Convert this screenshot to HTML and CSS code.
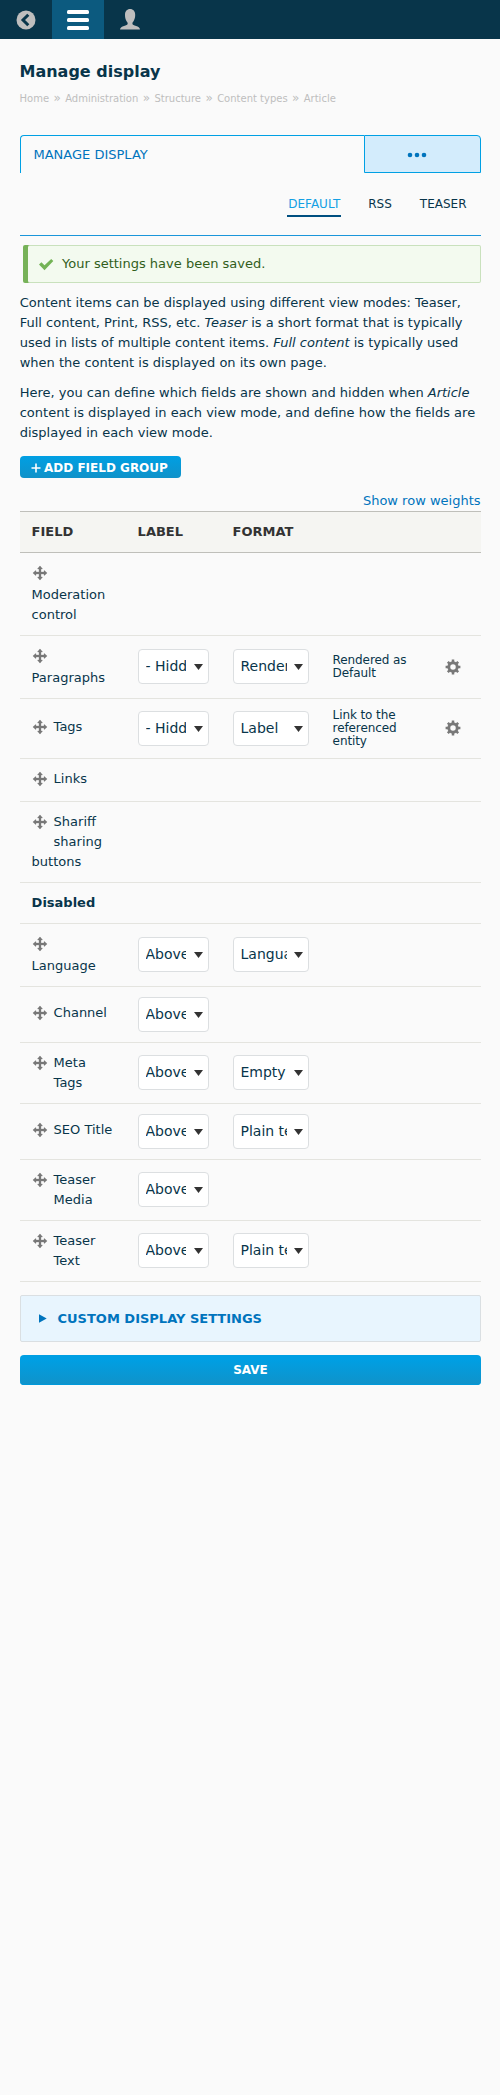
FILE: index.html
```html
<!DOCTYPE html>
<html lang="en">
<head>
<meta charset="utf-8">
<title>Manage display</title>
<link rel="stylesheet" href="styles.css">
</head>
<body>
<svg class="defs" width="0" height="0">
  <symbol id="move" viewBox="0 0 16 16"><path fill="#787878" stroke="#787878" stroke-width=".3" d="M14.900 7.800L12.300 5.600c-.2-.1-.3 0-.3.2V7H9V4h1.200c.2 0 .3-.2.2-.3L8.200 1.100c-.1-.1-.3-.1-.4 0L5.600 3.700c-.1.100 0 .3.2.3H7v3H4V5.800c0-.2-.2-.3-.3-.2L1.100 7.800c-.1.100-.1.300 0 .4l2.600 2.200c.1.100.3 0 .3-.2V9h3v3H5.800c-.2 0-.3.2-.2.3l2.200 2.600c.1.100.3.100.4 0l2.200-2.600c.1-.1 0-.3-.2-.3H9V9h3v1.200c0 .2.2.3.3.2l2.600-2.200c.1-.1.100-.3 0-.4z"/></symbol>
  <symbol id="gear" viewBox="0 0 16 16"><circle cx="8" cy="8" r="4.200" fill="none" stroke="#787878" stroke-width="2.900"/><path stroke="#787878" stroke-width="2.500" d="M8 .6v2.600M8 12.800v2.600M.6 8h2.600M12.800 8h2.600M2.800 2.800l1.800 1.800M11.400 11.400l1.800 1.800M13.200 2.800l-1.800 1.800M4.600 11.400l-1.800 1.800"/></symbol>
</svg>
<nav class="toolbar">
  <a class="tool"><svg width="20" height="20" viewBox="0 0 20 20"><circle cx="10" cy="10" r="9.500" fill="#bebebe"/><path d="M12.300 4.800L7 10l5.300 5.200" fill="none" stroke="#08354a" stroke-width="3"/></svg></a>
  <a class="tool tool-active"><svg width="22" height="22" viewBox="0 0 22 22" fill="#fff"><rect y="1" width="22" height="4" rx="1.500"/><rect y="9" width="22" height="4" rx="1.500"/><rect y="17" width="22" height="4" rx="1.500"/></svg></a>
  <a class="tool"><svg width="20" height="21" viewBox="0 0 20 21"><path fill="#bebebe" d="M0 20.500c.2-2.300 2-3 4-3.600 2-.6 3.700-1.100 3.700-2.500 0-1-.8-1.700-1.500-3C5.400 9.900 5 8.200 5 5.700 5 2.300 7 0 10.100 0s5.100 2.300 5.100 5.700c0 2.500-.5 4.200-1.300 5.700-.7 1.300-1.500 2-1.500 3 0 1.400 1.700 1.900 3.700 2.500 2 .6 3.800 1.300 3.900 3.600z"/></svg></a>
</nav>
<header class="head">
  <h1>Manage display</h1>
  <div class="breadcrumb"><span>Home</span><i>»</i><span>Administration</span><i>»</i><span>Structure</span><i>»</i><span>Content types</span><i>»</i><span>Article</span></div>
</header>
<main>
  <nav class="tabs"><a class="tab">MANAGE DISPLAY</a><button class="tab-more" aria-label="More tabs"><svg width="20" height="6" viewBox="0 0 20 6" fill="#0074bd"><circle cx="3" cy="3" r="2.300"/><circle cx="10" cy="3" r="2.300"/><circle cx="17" cy="3" r="2.300"/></svg></button></nav>
  <nav class="subtabs"><a class="current">DEFAULT</a><a>RSS</a><a>TEASER</a></nav>
  <div class="message"><svg width="16" height="16" viewBox="0 0 16 16"><path fill="#73b355" d="M6.500 14.200L1 8.600l2.400-2.300 3.100 3L13.200 3l2.100 2.100z"/></svg><span>Your settings have been saved.</span></div>
  <p>Content items can be displayed using different view modes: Teaser, Full content, Print, RSS, etc. <em>Teaser</em> is a short format that is typically used in lists of multiple content items. <em>Full content</em> is typically used when the content is displayed on its own page.</p>
  <p>Here, you can define which fields are shown and hidden when <em>Article</em> content is displayed in each view mode, and define how the fields are displayed in each view mode.</p>
  <a class="add"><svg width="10" height="10" viewBox="0 0 10 10"><path d="M5 .5v9M.5 5h9" stroke="#fff" stroke-width="1.600"/></svg>ADD FIELD GROUP</a>
  <div class="weights"><a>Show row weights</a></div>
  <table>
    <colgroup><col class="c-field"><col class="c-label"><col class="c-format"><col class="c-summary"><col></colgroup>
    <thead><tr><th>FIELD</th><th>LABEL</th><th colspan="3">FORMAT</th></tr></thead>
    <tbody>
      <tr><td><div class="field"><svg class="handle"><use href="#move"/></svg>Moderation control</div></td><td></td><td></td><td></td><td></td></tr>
      <tr><td><div class="field"><svg class="handle"><use href="#move"/></svg>Paragraphs</div></td><td><select class="s-label"><option>- Hidden -</option></select></td><td><select class="s-format"><option>Rendered entity</option></select></td><td><div class="summary">Rendered as Default</div></td><td><svg class="gear"><use href="#gear"/></svg></td></tr>
      <tr><td><div class="field"><svg class="handle"><use href="#move"/></svg>Tags</div></td><td><select class="s-label"><option>- Hidden -</option></select></td><td><select class="s-format"><option>Label</option></select></td><td><div class="summary">Link to the referenced entity</div></td><td><svg class="gear"><use href="#gear"/></svg></td></tr>
      <tr><td><div class="field"><svg class="handle"><use href="#move"/></svg>Links</div></td><td></td><td></td><td></td><td></td></tr>
      <tr><td><div class="field"><svg class="handle"><use href="#move"/></svg>Shariff sharing buttons</div></td><td></td><td></td><td></td><td></td></tr>
      <tr><td class="region" colspan="5">Disabled</td></tr>
      <tr><td><div class="field"><svg class="handle"><use href="#move"/></svg>Language</div></td><td><select class="s-label"><option>Above</option></select></td><td><select class="s-format"><option>Language</option></select></td><td></td><td></td></tr>
      <tr><td><div class="field"><svg class="handle"><use href="#move"/></svg>Channel</div></td><td><select class="s-label"><option>Above</option></select></td><td></td><td></td><td></td></tr>
      <tr><td><div class="field"><svg class="handle"><use href="#move"/></svg>Meta Tags</div></td><td><select class="s-label"><option>Above</option></select></td><td><select class="s-format"><option>Empty formatter</option></select></td><td></td><td></td></tr>
      <tr><td><div class="field"><svg class="handle"><use href="#move"/></svg>SEO Title</div></td><td><select class="s-label"><option>Above</option></select></td><td><select class="s-format"><option>Plain text</option></select></td><td></td><td></td></tr>
      <tr><td><div class="field"><svg class="handle"><use href="#move"/></svg>Teaser Media</div></td><td><select class="s-label"><option>Above</option></select></td><td></td><td></td><td></td></tr>
      <tr><td><div class="field"><svg class="handle"><use href="#move"/></svg>Teaser Text</div></td><td><select class="s-label"><option>Above</option></select></td><td><select class="s-format"><option>Plain text</option></select></td><td></td><td></td></tr>
    </tbody>
  </table>
  <div class="details"><svg width="8" height="9" viewBox="0 0 8 9"><path d="M0 .3v8.400L7.700 4.500z" fill="#0074bd"/></svg>CUSTOM DISPLAY SETTINGS</div>
  <button class="save">SAVE</button>
</main>
</body>
</html>
```
FILE: styles.css
```css
* { box-sizing: border-box; }
body { margin: 0; background: #fafafa; color: #08354a; font: 13px/20px "DejaVu Sans", sans-serif; }
.defs { display: block; }
.toolbar { display: flex; height: 39px; background: #08354a; }
.tool { width: 52px; height: 39px; display: flex; align-items: center; justify-content: center; }
.tool svg { display: block; }
.tool-active { background: #0c5a7f; }
.head { padding: 23px 20px 0 19.5px; height: 96px; }
h1 { margin: 0; font-size: 16px; line-height: 20px; }
.breadcrumb { display: flex; gap: 4.4px; margin-top: 8px; font-size: 10px; line-height: 18px; color: #bebebe; }
.breadcrumb i { font-style: normal; font-size: 12px; line-height: 16px; }
main { padding: 0 19px 0 20px; }
.tabs { display: flex; height: 38px; }
.tab { flex: 1; padding: 9px 12.5px; border: solid #00a0e4; border-width: 1px 0 0 1px; border-radius: 4px 0 0 0; color: #0074bd; }
.tab-more { width: 117px; padding: 1px 11px 0 0; border: 1px solid #00a0e4; border-radius: 0 4px 0 0; background: #d3ecfc; display: flex; align-items: center; justify-content: center; }
.subtabs { display: flex; justify-content: flex-end; height: 63px; padding: 20px 13.5px 0 0; gap: 26px; border-bottom: 1px solid #1a96da; font-size: 12px; }
.subtabs a { height: 24px; padding: 0 1px; line-height: 22px; }
.subtabs .current { color: #14a0e4; border-bottom: 2px solid #004f80; border-radius: 2px 2px 0 0; }
.message { display: flex; align-items: center; height: 38px; margin: 9px 0 10px 8px; padding-left: 10px; gap: 8px; border: 1px solid #c9e1bd; border-left: 0; border-radius: 2px; background: #f3faef; color: #325e1c; box-shadow: -5px 0 0 #77b259; }
p { margin: 0 -1px 10px -.3px; }
.add { display: flex; align-items: center; width: 161px; height: 22px; margin-top: 13px; padding: 1px 0 0 11px; gap: 3px; border-radius: 4px; background: linear-gradient(#009fe3, #1092c9); color: #fff; font-weight: 700; font-size: 12px; }
.weights { margin-top: 13px; padding-right: .5px; text-align: right; color: #0074bd; }
table { width: 461px; table-layout: fixed; border-collapse: separate; border-spacing: 0; }
.c-field { width: 106px; }
.c-label { width: 95px; }
.c-format { width: 100px; }
.c-summary { width: 112px; }
th { padding: 10px 12px 10px 11.6px; text-align: left; background: #f5f5f2; color: #333; border-top: 1px solid #bfbfba; border-bottom: 1px solid #bfbfba; }
td { padding: 10px 12px; vertical-align: middle; border-bottom: 1px solid #e4e4df; }
td:first-child { padding-left: 11.6px; }
.field { display: flow-root; margin: -.25px 0 .25px; }
.handle { float: left; width: 22px; height: 22px; padding: 2px 6px 4px 0; }
.region { font-weight: 700; }
select { display: block; height: 35px; margin: -.5px 0 .5px; padding: 0 22px 1px 6.5px; appearance: none; border: 1px solid #dcdfe1; border-radius: 4px; color: #08354a; font: 14px "DejaVu Sans", sans-serif; background: url('data:image/svg+xml,<svg xmlns="http://www.w3.org/2000/svg" width="9" height="6"><path fill="%23333" d="M0 0h9L4.500 6z"/></svg>') right 5px top 14px no-repeat #fff; }
.s-label { width: 71px; }
.s-format { width: 76px; padding-right: 21px; }
.summary { margin-left: -.4px; font-size: 12px; letter-spacing: -.1px; line-height: 13px; }
.gear { display: block; width: 16px; height: 16px; margin: -.25px 0 .25px; }
.details { display: flex; align-items: center; height: 47px; margin-top: 13px; padding-left: 18px; gap: 10.5px; border: 1px solid #dadfe2; border-radius: 2px; background: #e8f5fe; color: #0074bd; font-weight: 700; }
.save { display: block; width: 461px; height: 30px; margin-top: 13px; padding: 0; border: 0; border-radius: 4px; background: linear-gradient(#009fe3 15%, #1092c9); box-shadow: inset 0 -1px 0 #0099da; color: #fff; font: 700 12px "DejaVu Sans", sans-serif; }
```
